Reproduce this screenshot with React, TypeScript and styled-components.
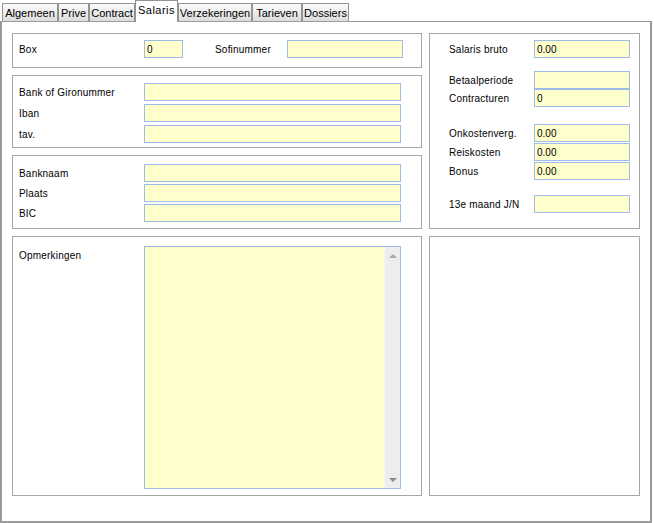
import styled, { createGlobalStyle } from "styled-components";

const GlobalStyle = createGlobalStyle`
  html, body {
    margin: 0;
    padding: 0;
    background: #ffffff;
  }
  body {
    font-family: "Liberation Sans", Arial, sans-serif;
  }
`;

const Screen = styled.div`
  width: 654px;
  height: 523px;
  background: #ffffff;
  overflow: hidden;
`;

const TabBar = styled.div`
  display: flex;
  align-items: flex-end;
  height: 21px;
  padding-left: 2px;
`;

const Tab = styled.div<{ $active?: boolean; $w: number }>`
  box-sizing: border-box;
  width: ${(p) => p.$w}px;
  height: ${(p) => (p.$active ? 22 : 18)}px;
  margin-bottom: ${(p) => (p.$active ? -1 : 0)}px;
  position: relative;
  z-index: ${(p) => (p.$active ? 2 : 1)};
  border: 1px solid #939393;
  border-bottom: none;
  background: ${(p) =>
    p.$active ? "#ffffff" : "linear-gradient(#fbfbfb, #dcdcdc)"};
  font-size: 11px;
  color: #000;
  display: flex;
  align-items: ${(p) => (p.$active ? "flex-start" : "center")};
  justify-content: center;
  padding-top: ${(p) => (p.$active ? 3 : 1)}px;
  letter-spacing: ${(p) => (p.$active ? "0.5px" : "0")};
  white-space: nowrap;
  overflow: hidden;
`;

const Panel = styled.div`
  box-sizing: border-box;
  width: 652px;
  height: 502px;
  border-top: 1px solid #9c9c9c;
  border-left: 2px solid #9a9a9a;
  border-right: 2px solid #9a9a9a;
  border-bottom: 2px solid #9a9a9a;
  padding: 11px 0 0 10px;
  display: grid;
  grid-template-columns: 410px 211px;
  grid-template-rows: 35px 73px 74px 260px;
  column-gap: 7px;
  row-gap: 7px;
`;

const Group = styled.div<{ $span?: number; $pt?: number; $pl?: number }>`
  box-sizing: border-box;
  border: 1px solid #a6a6a6;
  grid-row: span ${(p) => p.$span ?? 1};
  padding: ${(p) => p.$pt ?? 6}px 0 0 ${(p) => p.$pl ?? 6}px;
  display: flex;
  flex-direction: column;
`;

const Rows = styled.div<{ $gap: number }>`
  display: flex;
  flex-direction: column;
  gap: ${(p) => p.$gap}px;
`;

const Row = styled.div<{ $mt?: number; $top?: boolean }>`
  display: flex;
  align-items: ${(p) => (p.$top ? "flex-start" : "center")};
  margin-top: ${(p) => p.$mt ?? 0}px;
`;

const Label = styled.div<{ $w: number; $ml?: number }>`
  box-sizing: border-box;
  width: ${(p) => p.$w}px;
  height: 18px;
  margin-left: ${(p) => p.$ml ?? 0}px;
  padding-top: 2px;
  font-size: 10px;
  line-height: 16px;
  letter-spacing: 0.2px;
  color: #000;
  white-space: nowrap;
`;

const Field = styled.div<{ $w: number }>`
  box-sizing: border-box;
  width: ${(p) => p.$w}px;
  height: 18px;
  background: #ffffcc;
  border: 1px solid #9fbbe8;
  font-size: 10px;
  line-height: 16px;
  padding: 1px 0 0 2px;
  color: #000;
`;

const Memo = styled.div`
  box-sizing: border-box;
  width: 257px;
  height: 243px;
  border: 1px solid #9fbbe8;
  background: #ffffcc;
  display: flex;
  justify-content: flex-end;
`;

const ScrollTrack = styled.div`
  width: 16px;
  height: 100%;
  background: #ededed;
  border-left: 1px solid #f6f6f6;
  display: flex;
  flex-direction: column;
  justify-content: space-between;
  align-items: center;
  padding: 7px 0 6px;
  box-sizing: border-box;
`;

const Arrow = styled.div<{ $down?: boolean }>`
  width: 0;
  height: 0;
  border-left: 4px solid transparent;
  border-right: 4px solid transparent;
  ${(p) =>
    p.$down
      ? "border-top: 4px solid #8a8a8a;"
      : "border-bottom: 4px solid #a8a8a8;"}
`;

const tabs = [
  { name: "Algemeen", w: 56 },
  { name: "Prive", w: 31 },
  { name: "Contract", w: 46 },
  { name: "Salaris", w: 43, active: true },
  { name: "Verzekeringen", w: 74 },
  { name: "Tarieven", w: 50 },
  { name: "Dossiers", w: 47 },
];

export default function App() {
  return (
    <Screen>
      <GlobalStyle />
      <TabBar>
        {tabs.map((t) => (
          <Tab key={t.name} $w={t.w} $active={t.active}>
            {t.name}
          </Tab>
        ))}
      </TabBar>
      <Panel>
        <Group $pt={6}>
          <Row>
            <Label $w={125}>Box</Label>
            <Field $w={39}>0</Field>
            <Label $w={72} $ml={32}>
              Sofinummer
            </Label>
            <Field $w={116} />
          </Row>
        </Group>

        <Group $span={3} $pt={6} $pl={19}>
          <Row>
            <Label $w={85}>Salaris bruto</Label>
            <Field $w={96}>0.00</Field>
          </Row>
          <Row $mt={13}>
            <Label $w={85}>Betaalperiode</Label>
            <Field $w={96} />
          </Row>
          <Row>
            <Label $w={85}>Contracturen</Label>
            <Field $w={96}>0</Field>
          </Row>
          <Row $mt={17}>
            <Label $w={85}>Onkostenverg.</Label>
            <Field $w={96}>0.00</Field>
          </Row>
          <Row $mt={1}>
            <Label $w={85}>Reiskosten</Label>
            <Field $w={96}>0.00</Field>
          </Row>
          <Row $mt={1}>
            <Label $w={85}>Bonus</Label>
            <Field $w={96}>0.00</Field>
          </Row>
          <Row $mt={15}>
            <Label $w={85}>13e maand J/N</Label>
            <Field $w={96} />
          </Row>
        </Group>

        <Group $pt={7}>
          <Rows $gap={3}>
            <Row>
              <Label $w={125}>Bank of Gironummer</Label>
              <Field $w={257} />
            </Row>
            <Row>
              <Label $w={125}>Iban</Label>
              <Field $w={257} />
            </Row>
            <Row>
              <Label $w={125}>tav.</Label>
              <Field $w={257} />
            </Row>
          </Rows>
        </Group>

        <Group $pt={8}>
          <Rows $gap={2}>
            <Row>
              <Label $w={125}>Banknaam</Label>
              <Field $w={257} />
            </Row>
            <Row>
              <Label $w={125}>Plaats</Label>
              <Field $w={257} />
            </Row>
            <Row>
              <Label $w={125}>BIC</Label>
              <Field $w={257} />
            </Row>
          </Rows>
        </Group>

        <Group $pt={9}>
          <Row $top>
            <Label $w={125}>Opmerkingen</Label>
            <Memo>
              <ScrollTrack>
                <Arrow />
                <Arrow $down />
              </ScrollTrack>
            </Memo>
          </Row>
        </Group>

        <Group />
      </Panel>
    </Screen>
  );
}
